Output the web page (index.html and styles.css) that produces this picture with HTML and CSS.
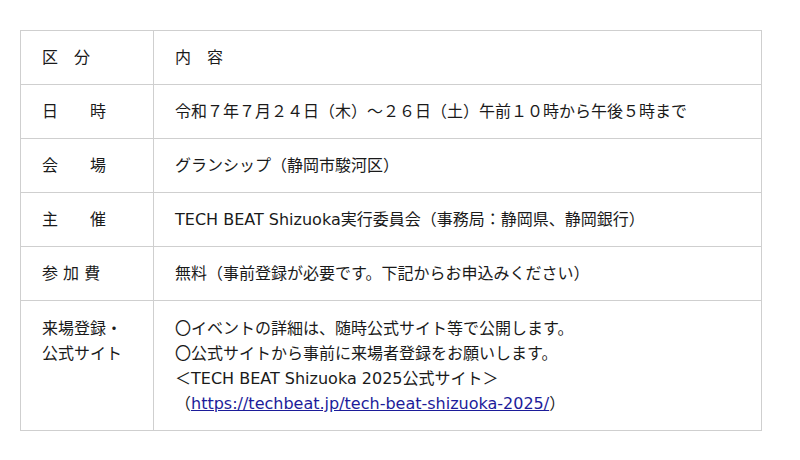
FILE: index.html
```html
<!DOCTYPE html>
<html lang="ja">
<head>
<meta charset="utf-8">
<link rel="stylesheet" href="styles.css">
</head>
<body>
<table class="info">
  <tr><th>区　分</th><td>内　容</td></tr>
  <tr><th>日　　時</th><td>令和７年７月２４日（木）～２６日（土）午前１０時から午後５時まで</td></tr>
  <tr><th>会　　場</th><td>グランシップ（静岡市駿河区）</td></tr>
  <tr><th>主　　催</th><td>TECH BEAT Shizuoka実行委員会（事務局：静岡県、静岡銀行）</td></tr>
  <tr><th>参 加 費</th><td>無料（事前登録が必要です。下記からお申込みください）</td></tr>
  <tr class="tall">
    <th>来場登録・<br>公式サイト</th>
    <td>〇イベントの詳細は、随時公式サイト等で公開します。<br>〇公式サイトから事前に来場者登録をお願いします。<br>＜TECH BEAT Shizuoka 2025公式サイト＞<br>（<a href="#">https://techbeat.jp/tech-beat-shizuoka-2025/</a>）</td>
  </tr>
</table>
</body>
</html>
```

FILE: styles.css
```css
html, body {
  margin: 0;
  padding: 0;
  background: #ffffff;
}
body {
  padding: 30px 20px;
  font-family: "DejaVu Sans", "Noto Sans CJK JP", sans-serif;
  font-size: 16px;
  color: #1a1a1a;
}
.info {
  width: 742px;
  border-collapse: collapse;
}
.info th, .info td {
  border: 1px solid #cfcfcf;
  height: 54px;
  padding: 0 21px;
  box-sizing: border-box;
  line-height: 25px;
  text-align: left;
  font-weight: normal;
  vertical-align: middle;
  white-space: nowrap;
}
.info th {
  width: 133px;
}
.info .tall th, .info .tall td {
  height: 130px;
  vertical-align: top;
  padding-top: 15px;
  padding-bottom: 14px;
}
.info a {
  color: #1c1c9a;
  text-decoration: underline;
}
```
